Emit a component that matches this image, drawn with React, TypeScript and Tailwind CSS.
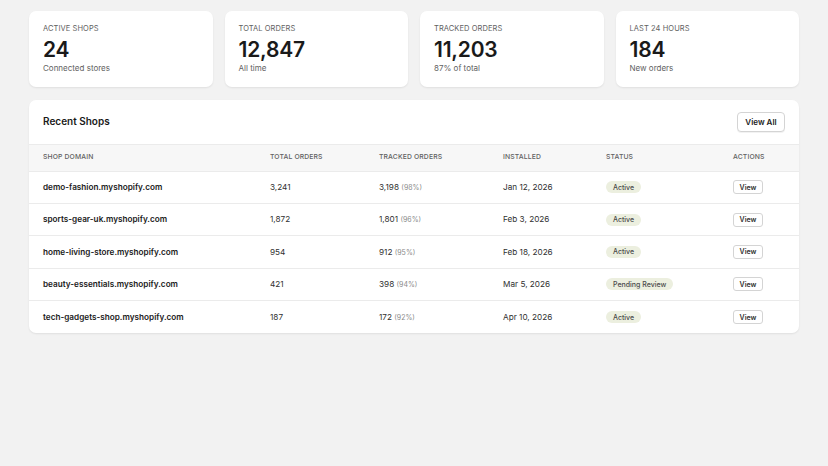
const stats = [
  { label: "Active Shops", value: "24", sub: "Connected stores" },
  { label: "Total Orders", value: "12,847", sub: "All time" },
  { label: "Tracked Orders", value: "11,203", sub: "87% of total" },
  { label: "Last 24 Hours", value: "184", sub: "New orders" },
];

const shops = [
  { domain: "demo-fashion.myshopify.com", total: "3,241", tracked: "3,198", pct: "98%", installed: "Jan 12, 2026", status: "Active" },
  { domain: "sports-gear-uk.myshopify.com", total: "1,872", tracked: "1,801", pct: "96%", installed: "Feb 3, 2026", status: "Active" },
  { domain: "home-living-store.myshopify.com", total: "954", tracked: "912", pct: "95%", installed: "Feb 18, 2026", status: "Active" },
  { domain: "beauty-essentials.myshopify.com", total: "421", tracked: "398", pct: "94%", installed: "Mar 5, 2026", status: "Pending Review" },
  { domain: "tech-gadgets-shop.myshopify.com", total: "187", tracked: "172", pct: "92%", installed: "Apr 10, 2026", status: "Active" },
];

function StatCard({ label, value, sub }: { label: string; value: string; sub: string }) {
  return (
    <div className="bg-white rounded-[7px] shadow-[0_1px_2px_rgba(0,0,0,0.08)] px-3.5 pt-[14px] pb-[15px]">
      <div className="text-[7.5px] uppercase text-[#616161] leading-none tracking-[0.01em]">{label}</div>
      <div className="text-[21px] font-semibold text-[#1a1a1a] leading-none mt-[6px] tracking-[-0.01em]">{value}</div>
      <div className="text-[8px] text-[#616161] leading-none mt-[4px]">{sub}</div>
    </div>
  );
}

export default function App() {
  return (
    <div
      className="min-h-[466px] bg-[#f2f2f2] px-[29px] pt-[11px]"
      style={{ fontFamily: "Inter, 'Liberation Sans', sans-serif" }}
    >
      <div className="grid grid-cols-4 gap-3">
        {stats.map((s) => (
          <StatCard key={s.label} {...s} />
        ))}
      </div>

      <div className="mt-[13px] bg-white rounded-[7px] shadow-[0_1px_2px_rgba(0,0,0,0.08)] overflow-hidden">
        <div className="flex items-center justify-between h-[44px] pl-3.5 pr-[14px]">
          <h2 className="text-[10px] font-semibold text-[#1a1a1a]">Recent Shops</h2>
          <button className="h-[20px] w-[48px] rounded-[4px] border border-[#d4d4d4] bg-white text-[8px] font-semibold text-[#1a1a1a] shadow-[0_1px_0_rgba(0,0,0,0.05)]">
            View All
          </button>
        </div>
        <table className="w-full table-fixed border-collapse">
          <colgroup>
            <col className="w-[227px]" />
            <col className="w-[109px]" />
            <col className="w-[124px]" />
            <col className="w-[103px]" />
            <col className="w-[127px]" />
            <col />
          </colgroup>
          <thead>
            <tr className="bg-[#f7f7f7] border-y border-[#ebebeb] h-[27px]">
              {["Shop Domain", "Total Orders", "Tracked Orders", "Installed", "Status", "Actions"].map((h) => (
                <th
                  key={h}
                  className="text-left pl-3.5 text-[6.8px] font-medium uppercase text-[#616161] tracking-[0.02em]"
                >
                  {h}
                </th>
              ))}
            </tr>
          </thead>
          <tbody>
            {shops.map((s, i) => (
              <tr key={s.domain} className={`h-[32.4px] ${i < shops.length - 1 ? "border-b border-[#ebebeb]" : ""}`}>
                <td className="pl-3.5 text-[8.2px] font-semibold text-[#1a1a1a]">{s.domain}</td>
                <td className="pl-3.5 text-[8.2px] text-[#303030]">{s.total}</td>
                <td className="pl-3.5 text-[8.2px] text-[#303030]">
                  {s.tracked} <span className="text-[7px] text-[#8a8a8a]">({s.pct})</span>
                </td>
                <td className="pl-3.5 text-[8.2px] text-[#303030]">{s.installed}</td>
                <td className="pl-3.5">
                  <div className="flex items-center">
                    <span className="rounded-full bg-[#ecefdf] px-[7px] h-[12px] flex items-center text-[7px] font-medium text-[#4a4a4a] leading-none">
                      {s.status}
                    </span>
                  </div>
                </td>
                <td className="pl-3.5">
                  <div className="flex items-center">
                    <button className="h-[14px] w-[30px] rounded-[3px] border border-[#d4d4d4] bg-white text-[7px] font-semibold text-[#303030] leading-none">
                      View
                    </button>
                  </div>
                </td>
              </tr>
            ))}
          </tbody>
        </table>
      </div>
    </div>
  );
}
